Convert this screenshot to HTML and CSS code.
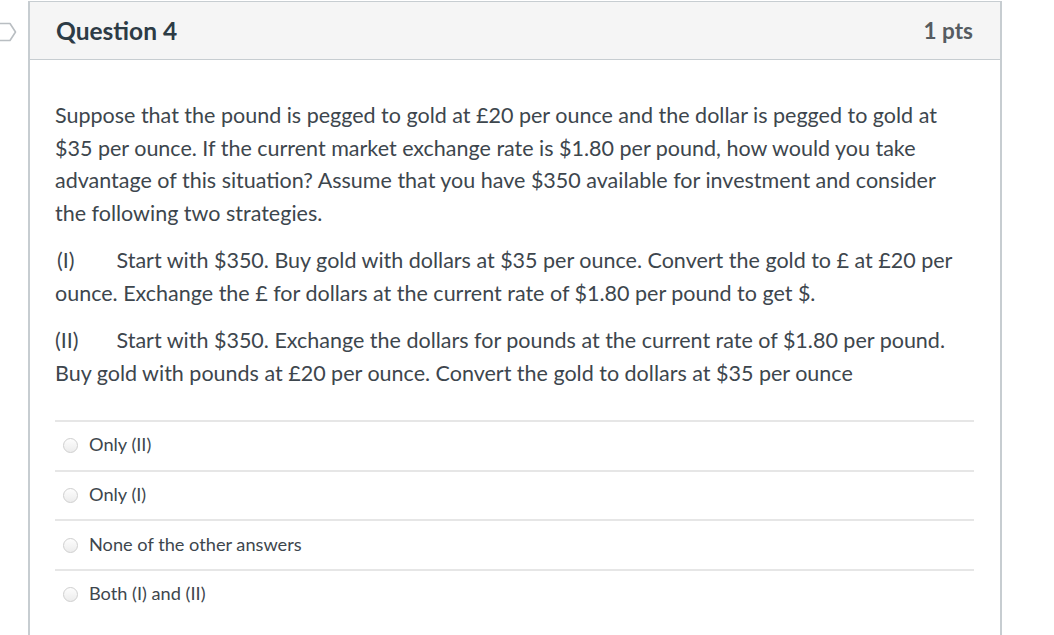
FILE: index.html
```html
<!DOCTYPE html>
<html>
<head>
<meta charset="utf-8">
<link rel="stylesheet" href="styles.css">
</head>
<body>
<div class="page">
  <div class="gutter">
    <svg class="flag" width="18" height="20" viewBox="0 0 18 20">
      <path d="M-4 1.5 H10 L15.5 10 L10 18.5 H-4" fill="none" stroke="#b9bec2" stroke-width="1.6" stroke-linejoin="round"/>
    </svg>
  </div>
  <div class="card">
    <div class="card-header">
      <h2 class="title">Question 4</h2>
      <span class="pts">1 pts</span>
    </div>
    <div class="card-body">
      <p class="para">Suppose that the pound is pegged to gold at £20 per ounce and the dollar is pegged to gold at $35 per ounce. If the current market exchange rate is $1.80 per pound, how would you take advantage of this situation? Assume that you have $350 available for investment and consider the following two strategies.</p>
      <p class="para"><span class="num num-i">(I)</span>Start with $350. Buy gold with dollars at $35 per ounce. Convert the gold to £ at £20 per ounce. Exchange the £ for dollars at the current rate of $1.80 per pound to get $.</p>
      <p class="para"><span class="num num-ii">(II)</span>Start with $350. Exchange the dollars for pounds at the current rate of $1.80 per pound. Buy gold with pounds at £20 per ounce. Convert the gold to dollars at $35 per ounce</p>
      <div class="answers">
        <div class="answer"><span class="radio"></span><span class="label">Only (II)</span></div>
        <div class="answer"><span class="radio"></span><span class="label">Only (I)</span></div>
        <div class="answer"><span class="radio"></span><span class="label">None of the other answers</span></div>
        <div class="answer"><span class="radio"></span><span class="label">Both (I) and (II)</span></div>
      </div>
    </div>
  </div>
</div>
</body>
</html>
```
FILE: styles.css
```css
html, body {
  margin: 0;
  padding: 0;
  background: #fff;
}
body {
  font-family: Lato, "Open Sans", sans-serif;
  color: #2d3b45;
  overflow: hidden;
}
.page {
  display: flex;
  align-items: flex-start;
  padding-top: 1px;
}
.gutter {
  width: 28px;
  flex: none;
  padding-top: 21px;
}
.flag {
  display: block;
}
.card {
  width: 970px;
  border: 2px solid #c7cdd1;
  border-top-width: 1px;
  border-bottom: none;
  min-height: 700px;
}
.card-header {
  display: flex;
  align-items: center;
  justify-content: space-between;
  height: 57px;
  background: #f5f5f5;
  border-bottom: 1px solid #c7cdd1;
  padding: 0 27px 0 26px;
}
.title {
  margin: 0;
  font-size: 24.5px;
  font-weight: 700;
  color: #2d3b45;
}
.pts {
  font-size: 22.5px;
  font-weight: 700;
  color: #565c61;
}
.card-body {
  padding: 39px 26px 0 25px;
}
.para {
  margin: 0 0 15px;
  padding-right: 14px;
  font-size: 21.5px;
  line-height: 32.5px;
  color: #3d464d;
}
.num {
  display: inline-block;
}
.num-i {
  padding-left: 2px;
  margin-right: 42px;
}
.num-ii {
  margin-right: 38px;
}
.answers {
  margin-top: 31px;
}
.answer {
  display: flex;
  align-items: center;
  box-sizing: border-box;
  height: 49.7px;
  padding-bottom: 3px;
  border-top: 2px solid #e6e6e6;
  padding-left: 8px;
}
.radio {
  width: 13px;
  height: 13px;
  border-radius: 50%;
  border: 1px solid #cfcfcf;
  background: linear-gradient(#fdfdfd, #ececec);
  margin-right: 11px;
  margin-top: 3px;
}
.label {
  font-size: 18.2px;
  color: #3d464d;
}
```
